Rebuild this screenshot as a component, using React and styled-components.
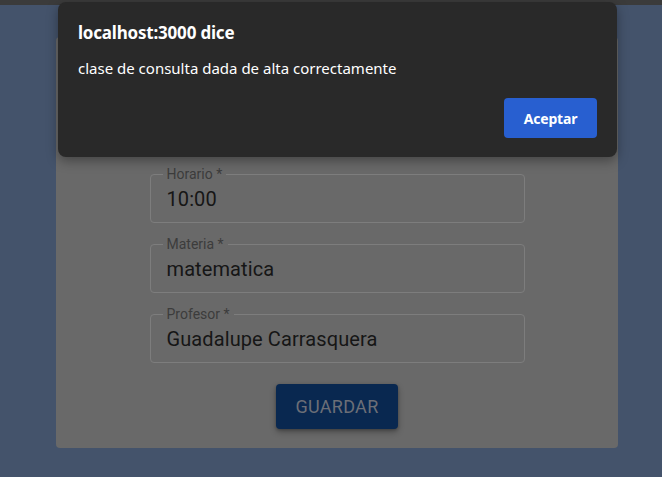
import React from "react";
import styled, { createGlobalStyle } from "styled-components";

const GlobalStyle = createGlobalStyle`
  html, body {
    margin: 0;
    padding: 0;
    background: #44536b;
    font-family: Roboto, "Liberation Sans", sans-serif;
  }
`;

const Page = styled.div`
  position: relative;
  width: 662px;
  height: 477px;
  overflow: hidden;
  background: #44536b;
`;

const TopStrip = styled.div`
  height: 5px;
  background: #3b3b3b;
`;

const Main = styled.div`
  display: flex;
  justify-content: center;
  padding-top: 32px;
  padding-left: 56px;
  padding-right: 44px;
`;

const Card = styled.div`
  flex: 1;
  background: #696969;
  border-radius: 4px;
  padding: 137px 0 19px;
  display: flex;
  flex-direction: column;
  align-items: center;
  gap: 21px;
`;

const Field = styled.div`
  position: relative;
  width: 375px;
  height: 49px;
  box-sizing: border-box;
  border: 1px solid #7d7d7d;
  border-radius: 4px;
  display: flex;
  align-items: center;
  padding: 0 16px;
`;

const Label = styled.span`
  position: absolute;
  left: 12px;
  top: -10px;
  padding: 0 4px;
  background: #696969;
  font-size: 14px;
  line-height: 18px;
  color: #3c3c3c;
`;

const Value = styled.span`
  font-size: 20px;
  color: #161616;
  letter-spacing: 0.1px;
`;

const SaveButton = styled.button`
  width: 122px;
  height: 45px;
  border: none;
  border-radius: 4px;
  background: #092850;
  color: #6c6f77;
  font-family: Roboto, sans-serif;
  font-weight: 400;
  font-size: 18px;
  letter-spacing: 0.3px;
  text-transform: uppercase;
  box-shadow: 0 3px 6px rgba(0, 0, 0, 0.3), 0 1px 3px rgba(0, 0, 0, 0.2);
`;

const Dialog = styled.div`
  position: absolute;
  left: 58px;
  top: 2px;
  width: 559px;
  height: 155px;
  box-sizing: border-box;
  background: #292929;
  border-radius: 8px;
  padding: 20px 20px 19px;
  box-shadow: 0 4px 12px rgba(0, 0, 0, 0.35);
  display: flex;
  flex-direction: column;
  font-family: "Noto Sans", "Open Sans", sans-serif;
  color: #ffffff;
`;

const Title = styled.div`
  font-size: 17px;
  font-weight: 700;
  line-height: 22px;
  letter-spacing: -0.2px;
`;

const Message = styled.div`
  margin-top: 14px;
  font-size: 15px;
  line-height: 20px;
`;

const Actions = styled.div`
  margin-top: auto;
  display: flex;
  justify-content: flex-end;
`;

const OkButton = styled.button`
  width: 93px;
  height: 40px;
  border: none;
  border-radius: 4px;
  background: #285fd0;
  color: #ffffff;
  font-family: "Noto Sans", "Open Sans", sans-serif;
  font-weight: 700;
  font-size: 14px;
  letter-spacing: -0.2px;
`;

const fields = [
  { label: "Horario", value: "10:00" },
  { label: "Materia", value: "matematica" },
  { label: "Profesor", value: "Guadalupe Carrasquera" },
];

export default function App() {
  return (
    <Page>
      <GlobalStyle />
      <TopStrip />
      <Main>
        <Card>
          {fields.map((f) => (
            <Field key={f.label}>
              <Label>{f.label} *</Label>
              <Value>{f.value}</Value>
            </Field>
          ))}
          <SaveButton>Guardar</SaveButton>
        </Card>
      </Main>
      <Dialog>
        <Title>localhost:3000 dice</Title>
        <Message>clase de consulta dada de alta correctamente</Message>
        <Actions>
          <OkButton>Aceptar</OkButton>
        </Actions>
      </Dialog>
    </Page>
  );
}
